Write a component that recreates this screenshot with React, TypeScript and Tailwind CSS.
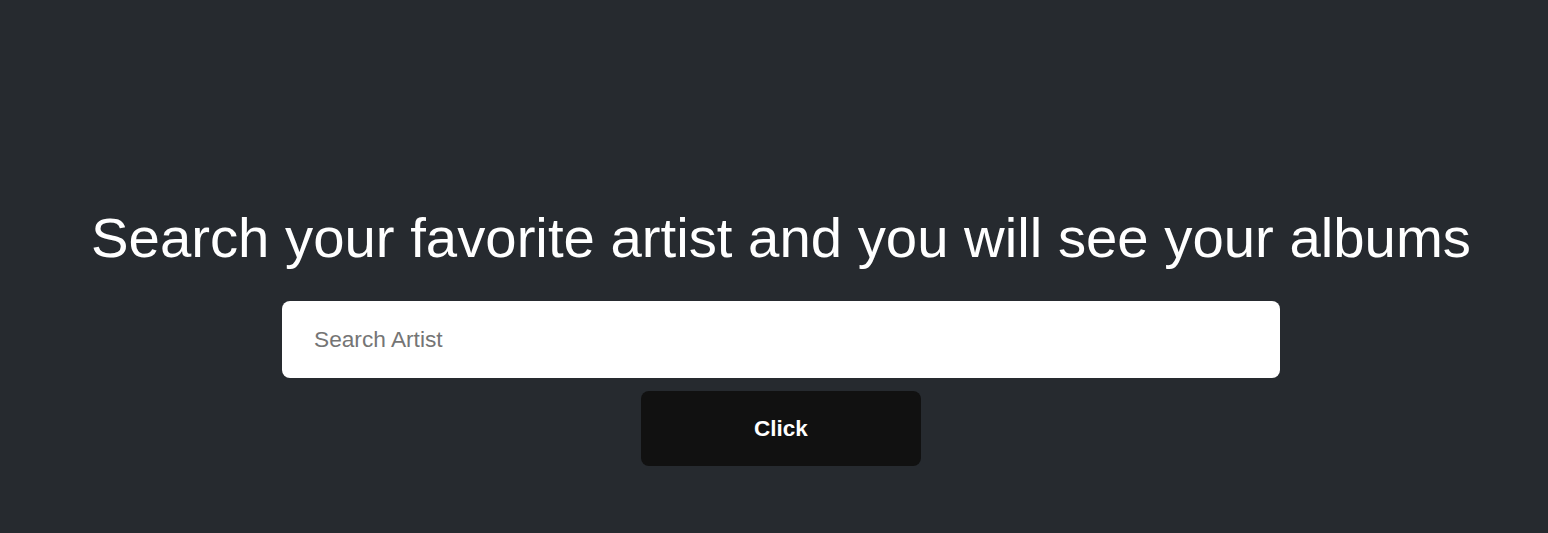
const App: React.FC = () => {
  return (
    <div
      className="min-h-screen bg-[#262a2f] flex flex-col items-center pt-[200px] pl-[14px]"
      style={{ fontFamily: '"Liberation Sans", Arial, sans-serif' }}
    >
      <h1 className="text-[56.3px] leading-[76px] text-white font-normal">
        Search your favorite artist and you will see your albums
      </h1>
      <input
        type="text"
        placeholder="Search Artist"
        className="mt-[25px] w-[998px] h-[77px] rounded-lg bg-white px-8 text-[22.7px] text-black placeholder:text-[#757575] outline-none"
      />
      <button className="mt-[13px] w-[280px] h-[75px] rounded-lg bg-[#111111] text-white text-[22.5px] font-bold">
        Click
      </button>
    </div>
  );
};

export default App;
